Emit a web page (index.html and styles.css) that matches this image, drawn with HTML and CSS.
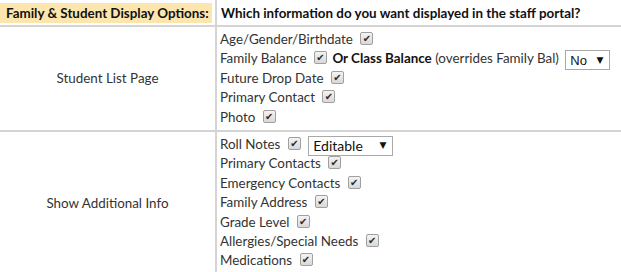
FILE: index.html
```html
<!DOCTYPE html>
<html>
<head>
<meta charset="utf-8">
<link rel="stylesheet" href="styles.css">
</head>
<body>
<table class="opts">
  <tr class="head">
    <th class="lab"><span class="hl">Family &amp; Student Display Options:</span></th>
    <th class="q">Which information do you want displayed in the staff portal?</th>
  </tr>
  <tr>
    <td class="lab">Student List Page</td>
    <td class="items">
      <div class="it">Age/Gender/Birthdate <span class="cb">✔</span></div>
      <div class="it">Family Balance <span class="cb">✔</span> <b class="strong">Or Class Balance</b> (overrides Family Bal) <span class="sel sel-no">No<span class="arr">▼</span></span></div>
      <div class="it">Future Drop Date <span class="cb">✔</span></div>
      <div class="it">Primary Contact <span class="cb">✔</span></div>
      <div class="it">Photo <span class="cb">✔</span></div>
    </td>
  </tr>
  <tr>
    <td class="lab">Show Additional Info</td>
    <td class="items">
      <div class="it">Roll Notes <span class="cb">✔</span> <span class="sel sel-ed">Editable<span class="arr">▼</span></span></div>
      <div class="it">Primary Contacts <span class="cb">✔</span></div>
      <div class="it">Emergency Contacts <span class="cb">✔</span></div>
      <div class="it">Family Address <span class="cb">✔</span></div>
      <div class="it">Grade Level <span class="cb">✔</span></div>
      <div class="it">Allergies/Special Needs <span class="cb">✔</span></div>
      <div class="it">Medications <span class="cb">✔</span></div>
    </td>
  </tr>
</table>
</body>
</html>
```
FILE: styles.css
```css
html, body {
  margin: 0;
  padding: 0;
  background: #fff;
}
body {
  font-family: Lato, "Open Sans", sans-serif;
  font-size: 13.4px;
  color: #333;
}
.opts {
  border-collapse: collapse;
  width: 621px;
}
.opts th {
  font-weight: bold;
  color: #111;
  text-align: left;
  padding: 4px 6px 3px 4px;
  height: 18px;
}
.opts .head th {
  border-bottom: 2px solid #d4d4d4;
}
.opts th.lab {
  padding-left: 0;
  padding-right: 0;
  text-align: left;
  width: 215px;
}
.hl {
  background: #fce6ae;
  padding: 2px 3px 2px 6px;
}
.opts td {
  border-bottom: 2px solid #d4d4d4;
  vertical-align: middle;
}
.opts .lab {
  border-right: 2px solid #d4d4d4;
  text-align: center;
}
.items {
  padding: 3px 4px 3px 3px;
}
.it {
  height: 19.4px;
  line-height: 19px;
  white-space: nowrap;
}
.strong {
  color: #111;
  margin-left: 2px;
}
.cb {
  display: inline-block;
  overflow: hidden;
  width: 11px;
  height: 11px;
  border: 1px solid #a0a0a0;
  border-radius: 2px;
  background: linear-gradient(#f4f4f4, #d8d8d8);
  color: #2a2a2a;
  font-size: 10px;
  font-weight: bold;
  line-height: 11px;
  text-align: center;
  vertical-align: -1px;
  margin-left: 4px;
  font-family: "DejaVu Sans", sans-serif;
}
.sel {
  display: inline-flex;
  align-items: center;
  justify-content: space-between;
  box-sizing: border-box;
  height: 20px;
  border: 1px solid #a9a9a9;
  background: #fff;
  color: #111;
  padding: 0 6px 0 4px;
  vertical-align: middle;
  font-family: "Liberation Sans", Arial, sans-serif;
  font-size: 13px;
}
.sel-no { width: 45px; margin-left: 3px; }
.sel-ed { width: 85px; margin-left: 4px; font-family: Lato, sans-serif; font-size: 14px; }
.arr {
  font-size: 9px;
  color: #111;
  font-family: "DejaVu Sans", sans-serif;
}
```
